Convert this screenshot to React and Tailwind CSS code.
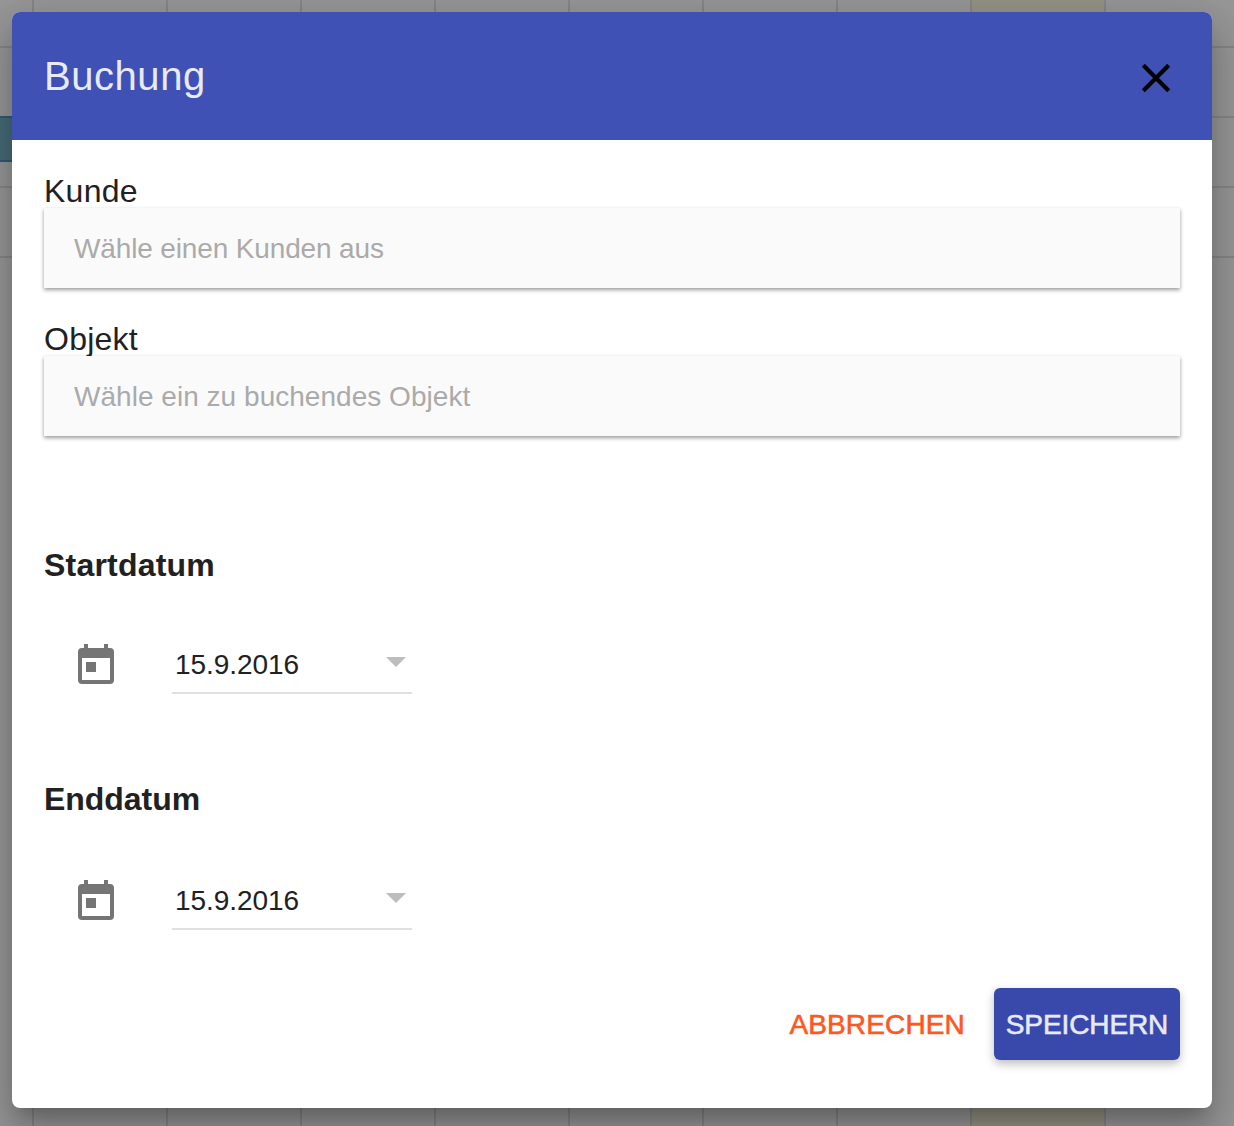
import React from "react";

const COLUMNS = ["c0", "c1", "c2", "c3", "c4", "c5", "c6", "c7", "c8"];
const ROWS = ["r0", "r1", "r2"];

// Dimmed booking calendar behind the dialog
function Schedule() {
  return (
    <div className="absolute inset-0 overflow-hidden bg-[#979797]">
      <div className="flex h-full">
        <div className="w-8 shrink-0" />
        {COLUMNS.map((id) => (
          <div
            key={id}
            className={
              id === "c7"
                ? "w-[134px] shrink-0 border-l-2 border-[#868686] bg-[#959385]"
                : "w-[134px] shrink-0 border-l-2 border-[#868686]"
            }
          />
        ))}
      </div>
      <div className="absolute inset-x-0 top-0">
        <div className="h-12 border-b-2 border-[#868686]" />
        {ROWS.map((id) => (
          <div key={id} className="h-[70px] border-b-2 border-[#868686]" />
        ))}
      </div>
      <div className="absolute left-0 top-[116px] h-[46px] w-6 border-y-2 border-[#305b73] bg-[#476b78]" />
    </div>
  );
}

function SelectField({ label, children, className }) {
  return (
    <div className={className}>
      <label className="block h-9 whitespace-nowrap text-[32px] leading-[38px] tracking-[0.25px]">{label}</label>
      <div className="relative flex h-20 items-center bg-[#fafafa] pl-[30px] pt-0.5 text-[28px] text-[#aaaaaa] shadow-[0_2px_4px_rgba(0,0,0,0.4),0_0_1px_rgba(0,0,0,0.04)]">
        {children}
      </div>
    </div>
  );
}

function CalendarIcon() {
  return (
    <svg viewBox="0 0 24 24" className="size-12 fill-[#757575]">
      <path
        fillRule="evenodd"
        d="M6 2h2v2h8V2h2v2h1a2 2 0 0 1 2 2v14a2 2 0 0 1-2 2H5a2 2 0 0 1-2-2V6a2 2 0 0 1 2-2h1zM5 9v11h14V9zM7 11h5v5H7z"
      />
    </svg>
  );
}

function DateField({ title, value, titleClass, rowClass }) {
  return (
    <section>
      <h3 className={titleClass}>{title}</h3>
      <div className={rowClass}>
        <div className="mt-1.5">
          <CalendarIcon />
        </div>
        <div className="ml-[52px] flex h-[60px] w-60 items-center border-b-2 border-[#e0e0e0] pl-[3px]">
          <span className="pt-1 text-[28px] leading-8 tracking-[-0.05px]">{value}</span>
          <svg viewBox="0 0 20 10" className="-mt-0.5 ml-auto mr-[6px] h-[10px] w-5 fill-[#bdbdbd]">
            <path d="M0 0h20L10 10z" />
          </svg>
        </div>
      </div>
    </section>
  );
}

export default function App() {
  return (
    <div className="relative h-[1126px] w-[1234px] overflow-hidden font-['Liberation_Sans',Arial,sans-serif] text-[#212121]">
      <Schedule />
      <main className="relative ml-3 mt-3 flex h-[1096px] w-[1200px] flex-col rounded-lg bg-white shadow-[0_14px_16px_-8px_rgba(0,0,0,0.2),0_26px_38px_4px_rgba(0,0,0,0.14),0_10px_48px_8px_rgba(0,0,0,0.12)]">
        <header className="flex h-32 shrink-0 items-center justify-between rounded-t-lg bg-[#3f51b5] pl-8 pr-8 text-[#e8eaf6]">
          <h2 className="text-[40px] tracking-[0.55px]">Buchung</h2>
          <button aria-label="Schließen" className="mt-1">
            <svg viewBox="0 0 48 48" className="size-12 fill-none stroke-black stroke-[4.2]">
              <path d="M11.3 11.3l25.4 25.4M36.7 11.3L11.3 36.7" />
            </svg>
          </button>
        </header>
        <div className="flex flex-1 flex-col px-8 pt-8">
          <SelectField label="Kunde">
            <span className="tracking-[-0.14px]">Wähle einen Kunden aus</span>
          </SelectField>
          <SelectField label="Objekt" className="mt-8">
            <span className="tracking-[0.03px]">Wähle ein zu buchendes Objekt</span>
          </SelectField>
          <div className="mt-[110px] flex flex-col gap-[86px]">
            <DateField
              title="Startdatum"
              value="15.9.2016"
              titleClass="h-[38px] text-[32px] font-bold leading-[38px] tracking-[0.2px]"
              rowClass="ml-7 mt-[50px] flex items-start"
            />
            <DateField
              title="Enddatum"
              value="15.9.2016"
              titleClass="h-[38px] text-[32px] font-bold leading-[38px] tracking-[-0.05px]"
              rowClass="ml-7 mt-[52px] flex items-start"
            />
          </div>
        </div>
        <footer className="flex justify-end gap-4 pb-12 pr-8 text-[28px]">
          <button className="h-[72px] px-[13px] pt-px text-[#ff5722] tracking-[0.15px] [-webkit-text-stroke:0.6px_#ff5722]">ABBRECHEN</button>
          <button className="h-[72px] w-[186px] rounded-md bg-[#3949ab] pt-px text-[#e7e9f5] shadow-[0_4px_10px_rgba(0,0,0,0.26)] tracking-[-0.1px] [-webkit-text-stroke:0.6px_#e7e9f5]">
            SPEICHERN
          </button>
        </footer>
      </main>
    </div>
  );
}
